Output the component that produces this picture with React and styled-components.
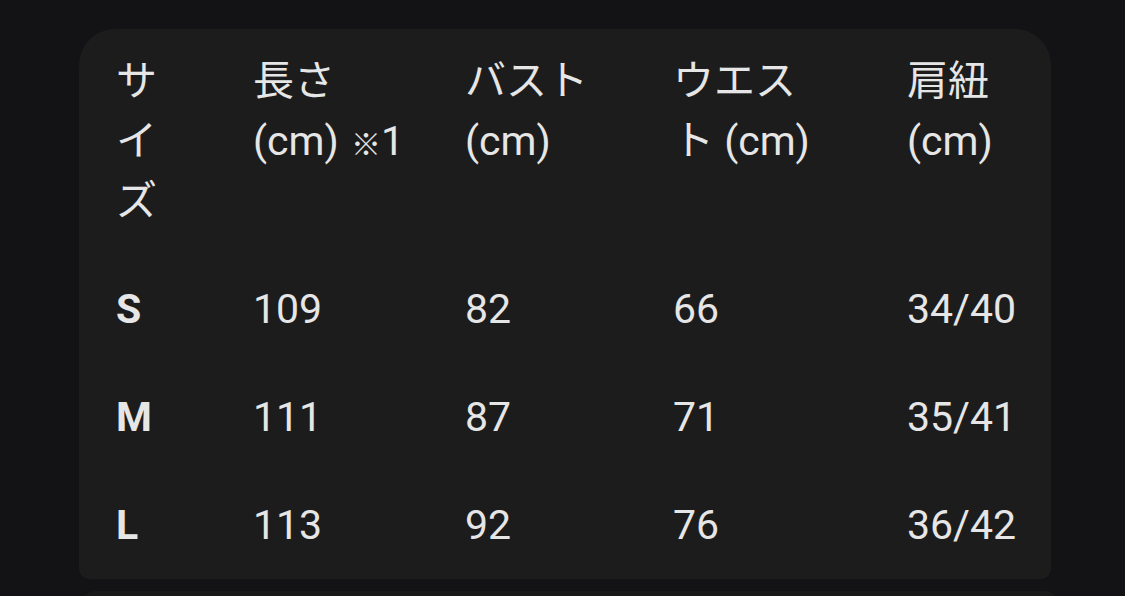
import styled, { createGlobalStyle } from 'styled-components';

const GlobalStyle = createGlobalStyle`
    html, body {
        margin: 0;
        padding: 0;
        background: #131315;
    }
    body {
        font-family: Roboto, "Noto Sans CJK JP", sans-serif;
        color: #e6e6e6;
    }
`

const Page = styled.div`
    width: 1125px;
    height: 596px;
    overflow: hidden;
    padding: 29px 0 0 79px;
    box-sizing: border-box;
`
const Card = styled.div`
    width: 972px;
    padding-left: 37px;
    box-sizing: border-box;
    background: #1c1c1d;
    border-radius: 36px 36px 10px 10px;
    display: grid;
    grid-template-columns: 137px 212px 208px 234px 1fr;
`
const Cell = styled.div`
    padding: ${p => (p.$head ? '22px 0 24px' : '24px 0')};
    font-size: 41px;
    line-height: 60px;
    font-weight: ${p => (p.$bold ? 700 : 400)};
    white-space: ${p => (p.$head ? 'normal' : 'nowrap')};
`
const Text = styled.div`
    max-width: ${p => p.$max}px;
`
const Note = styled.span`
    font-size: 30px;
    margin-left: 2px;
`
const NextCard = styled.div`
    width: 972px;
    height: 30px;
    margin: 12px 0 0 5px;
    background: #19191a;
    border-radius: 10px;
`

const heads = [
    { label: 'サイズ', max: 50 },
    { label: <>長さ (cm) <Note>※</Note>1</>, max: 160, key: 'len' },
    { label: 'バスト (cm)', max: 160 },
    { label: 'ウエスト (cm)', max: 160 },
    { label: '肩紐 (cm)', max: 120 },
]

const rows = [
    ['S', '109', '82', '66', '34/40'],
    ['M', '111', '87', '71', '35/41'],
    ['L', '113', '92', '76', '36/42'],
]

export default function App() {
    return (
        <Page>
            <GlobalStyle />
            <Card>
                {heads.map((h) => (
                    <Cell $head key={h.key || h.label}>
                        <Text $max={h.max}>{h.label}</Text>
                    </Cell>
                ))}
                {rows.map((r) =>
                    r.map((v, i) => (
                        <Cell key={r[0] + i} $bold={i === 0}>{v}</Cell>
                    ))
                )}
            </Card>
            <NextCard />
        </Page>
    )
}
